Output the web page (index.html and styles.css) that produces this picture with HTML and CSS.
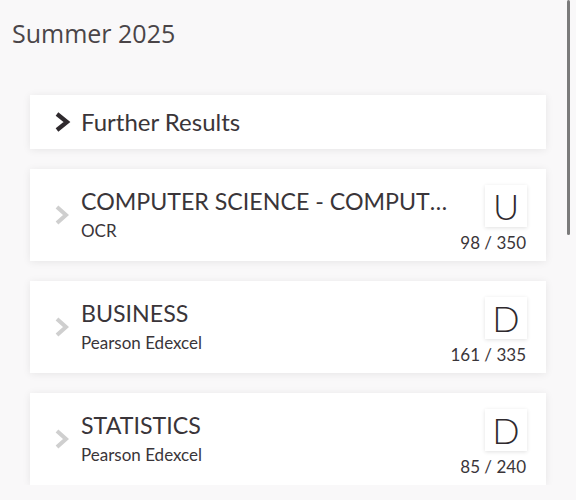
FILE: index.html
```html
<!DOCTYPE html>
<html>
<head>
<meta charset="utf-8">
<link rel="stylesheet" href="styles.css">
</head>
<body>
<div class="page">
  <h1 class="season">Summer 2025</h1>
  <div class="list">
    <div class="card card-link">
      <svg class="chev chev-dark" viewBox="0 0 17 20" width="17" height="20"><path d="M3 2 L13 10 L3 18" fill="none" stroke="#2f2a2e" stroke-width="4.2" stroke-linejoin="miter"/></svg>
      <span class="link-text">Further Results</span>
    </div>
    <div class="card result">
      <svg class="chev" viewBox="0 0 16 20" width="16" height="20"><path d="M3 2 L12 10 L3 18" fill="none" stroke="#cfcfcf" stroke-width="4"/></svg>
      <div class="info">
        <div class="subject">COMPUTER SCIENCE - COMPUTER SCIENCE</div>
        <div class="board">OCR</div>
      </div>
      <div class="gradecol">
        <div class="grade">U</div>
        <div class="score">98 / 350</div>
      </div>
    </div>
    <div class="card result">
      <svg class="chev" viewBox="0 0 16 20" width="16" height="20"><path d="M3 2 L12 10 L3 18" fill="none" stroke="#cfcfcf" stroke-width="4"/></svg>
      <div class="info">
        <div class="subject">BUSINESS</div>
        <div class="board">Pearson Edexcel</div>
      </div>
      <div class="gradecol">
        <div class="grade">D</div>
        <div class="score">161 / 335</div>
      </div>
    </div>
    <div class="card result">
      <svg class="chev" viewBox="0 0 16 20" width="16" height="20"><path d="M3 2 L12 10 L3 18" fill="none" stroke="#cfcfcf" stroke-width="4"/></svg>
      <div class="info">
        <div class="subject">STATISTICS</div>
        <div class="board">Pearson Edexcel</div>
      </div>
      <div class="gradecol">
        <div class="grade">D</div>
        <div class="score">85 / 240</div>
      </div>
    </div>
  </div>
</div>
<div class="scrollbar"></div>
</body>
</html>
```
FILE: styles.css
```css
html, body {
  margin: 0;
  padding: 0;
  background: #f9f8f9;
  color: #3a3539;
  font-family: Lato, "Open Sans", sans-serif;
  overflow: hidden;
}
.page {
  padding: 18px 30px 0 30px;
}
.season {
  margin: 0 0 0 -18px;
  font-family: "Open Sans", Lato, sans-serif;
  font-weight: 400;
  font-size: 25px;
  line-height: 30px;
  color: #4a4548;
}
.list {
  margin-top: 47px;
  display: flex;
  flex-direction: column;
  gap: 20px;
}
.card {
  background: #ffffff;
  box-shadow: 0 1px 8px rgba(0,0,0,0.08);
  display: flex;
  align-items: center;
}
.card-link {
  height: 54px;
  padding-left: 24px;
}
.chev {
  flex: none;
  display: block;
}
.link-text {
  margin-left: 10px;
  font-size: 24px;
  line-height: 28px;
}
.result {
  height: 92px;
  padding: 0 19px 0 24px;
  box-sizing: border-box;
}
.info {
  flex: 1;
  min-width: 0;
  margin-left: 11px;
  align-self: flex-start;
  padding-top: 18px;
}
.subject {
  font-size: 23.2px;
  line-height: 28px;
  white-space: nowrap;
  overflow: hidden;
  text-overflow: ellipsis;
}
.board {
  font-size: 17px;
  line-height: 22px;
  margin-top: 5px;
}
.gradecol {
  flex: none;
  align-self: stretch;
  display: flex;
  flex-direction: column;
  align-items: flex-end;
  padding-top: 16px;
}
.grade {
  width: 42px;
  height: 42px;
  box-shadow: 0 1px 4px rgba(0,0,0,0.12);
  background: #fff;
  display: flex;
  align-items: center;
  justify-content: center;
  font-size: 36px;
  font-weight: 300;
  line-height: 1;
  color: #2f2a2e;
}
.score {
  margin-top: 5px;
  margin-right: 1px;
  font-size: 17px;
  line-height: 22px;
  white-space: nowrap;
}
.scrollbar {
  position: absolute;
  top: 0;
  right: 6px;
  width: 3px;
  height: 235px;
  background: #7b7b7b;
  border-radius: 2px;
}
```
